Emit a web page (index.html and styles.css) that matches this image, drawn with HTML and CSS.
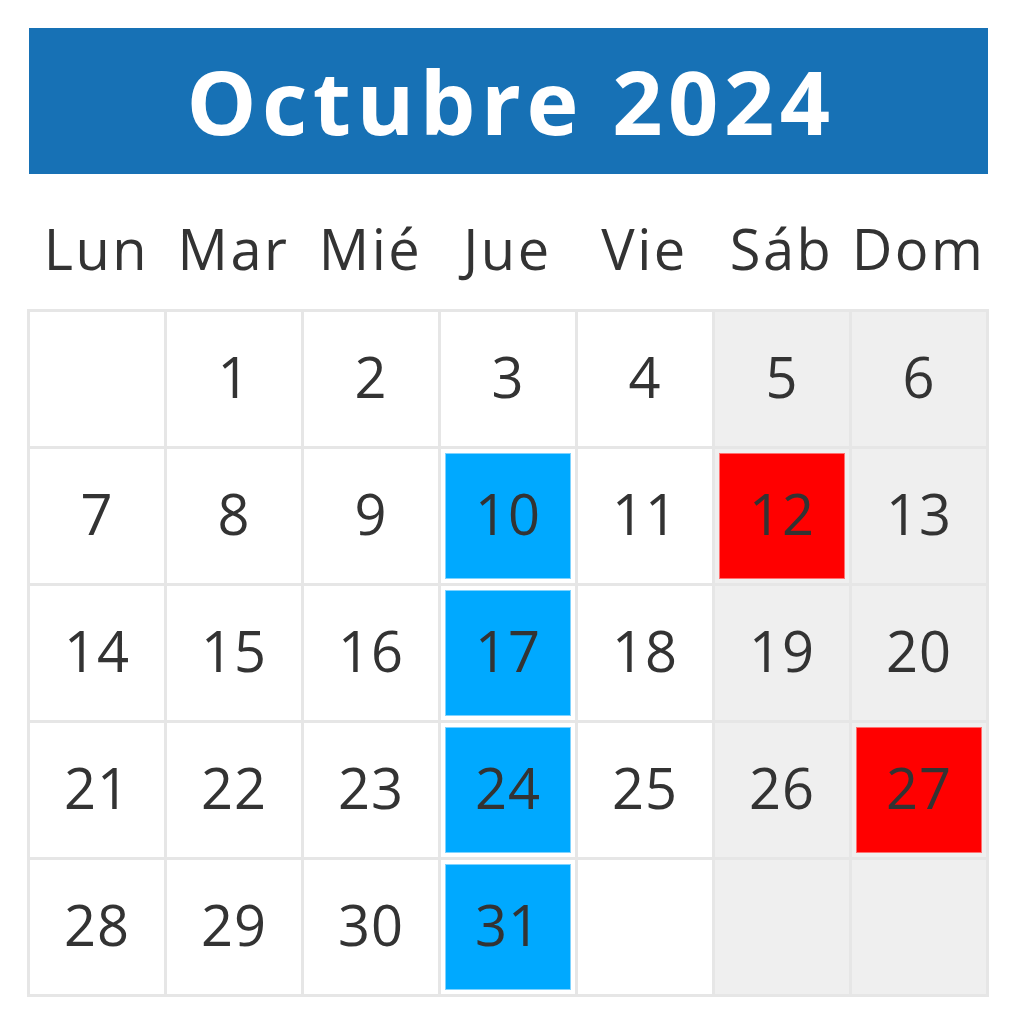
FILE: index.html
```html
<!DOCTYPE html>
<html lang="es">
<head>
<meta charset="utf-8">
<title>Octubre 2024</title>
<link rel="stylesheet" href="styles.css">
</head>
<body>
<div class="calendar">
  <div class="title">Octubre 2024</div>
  <div class="weekdays">
    <div class="wd">Lun</div><div class="wd">Mar</div><div class="wd">Mié</div><div class="wd">Jue</div><div class="wd">Vie</div><div class="wd">Sáb</div><div class="wd">Dom</div>
  </div>
  <div class="grid">
    <div class="cell"></div>
    <div class="cell"><span class="num">1</span></div>
    <div class="cell"><span class="num">2</span></div>
    <div class="cell"><span class="num">3</span></div>
    <div class="cell"><span class="num">4</span></div>
    <div class="cell we"><span class="num">5</span></div>
    <div class="cell we"><span class="num">6</span></div>

    <div class="cell"><span class="num">7</span></div>
    <div class="cell"><span class="num">8</span></div>
    <div class="cell"><span class="num">9</span></div>
    <div class="cell"><span class="num blue">10</span></div>
    <div class="cell"><span class="num">11</span></div>
    <div class="cell we"><span class="num red">12</span></div>
    <div class="cell we"><span class="num">13</span></div>

    <div class="cell"><span class="num">14</span></div>
    <div class="cell"><span class="num">15</span></div>
    <div class="cell"><span class="num">16</span></div>
    <div class="cell"><span class="num blue">17</span></div>
    <div class="cell"><span class="num">18</span></div>
    <div class="cell we"><span class="num">19</span></div>
    <div class="cell we"><span class="num">20</span></div>

    <div class="cell"><span class="num">21</span></div>
    <div class="cell"><span class="num">22</span></div>
    <div class="cell"><span class="num">23</span></div>
    <div class="cell"><span class="num blue">24</span></div>
    <div class="cell"><span class="num">25</span></div>
    <div class="cell we"><span class="num">26</span></div>
    <div class="cell we"><span class="num red">27</span></div>

    <div class="cell"><span class="num">28</span></div>
    <div class="cell"><span class="num">29</span></div>
    <div class="cell"><span class="num">30</span></div>
    <div class="cell"><span class="num blue">31</span></div>
    <div class="cell"></div>
    <div class="cell we"></div>
    <div class="cell we"></div>
  </div>
</div>
</body>
</html>
```

FILE: styles.css
```css
html, body {
  margin: 0;
  padding: 0;
  background: #ffffff;
}

.calendar {
  width: 962px;
  margin-left: 27px;
  padding-top: 28px;
  font-family: "Open Sans", "Liberation Sans", sans-serif;
  color: #333333;
}

.title {
  margin: 0 1px 0 2px;
  height: 146px;
  background: #1771b5;
  color: #ffffff;
  font-weight: 700;
  font-size: 88px;
  letter-spacing: 5.5px;
  text-indent: 5px;
  display: flex;
  align-items: center;
  justify-content: center;
  line-height: 1;
}

.weekdays {
  height: 135px;
  display: grid;
  grid-template-columns: repeat(7, 137px);
  padding-left: 1px;
  align-items: center;
}

.wd {
  text-align: center;
  font-size: 56px;
  line-height: 1;
  padding-top: 12px;
  letter-spacing: 2.5px;
}

.grid {
  display: grid;
  grid-template-columns: repeat(7, 134px);
  grid-auto-rows: 134px;
  gap: 3px;
  padding: 3px;
  background: #e6e6e6;
}

.cell {
  background: #ffffff;
  display: flex;
  align-items: center;
  justify-content: center;
}

.cell.we {
  background: #efefef;
}

.num {
  font-size: 56px;
  line-height: 1;
  width: 126px;
  height: 126px;
  padding-bottom: 7px;
  letter-spacing: 1px;
  display: flex;
  align-items: center;
  justify-content: center;
  box-sizing: border-box;
}

.num.blue {
  background: #00a9ff;
  border: 1px solid #7fd3ff;
}

.num.red {
  background: #ff0000;
  border: 1px solid #ff7070;
}
```
